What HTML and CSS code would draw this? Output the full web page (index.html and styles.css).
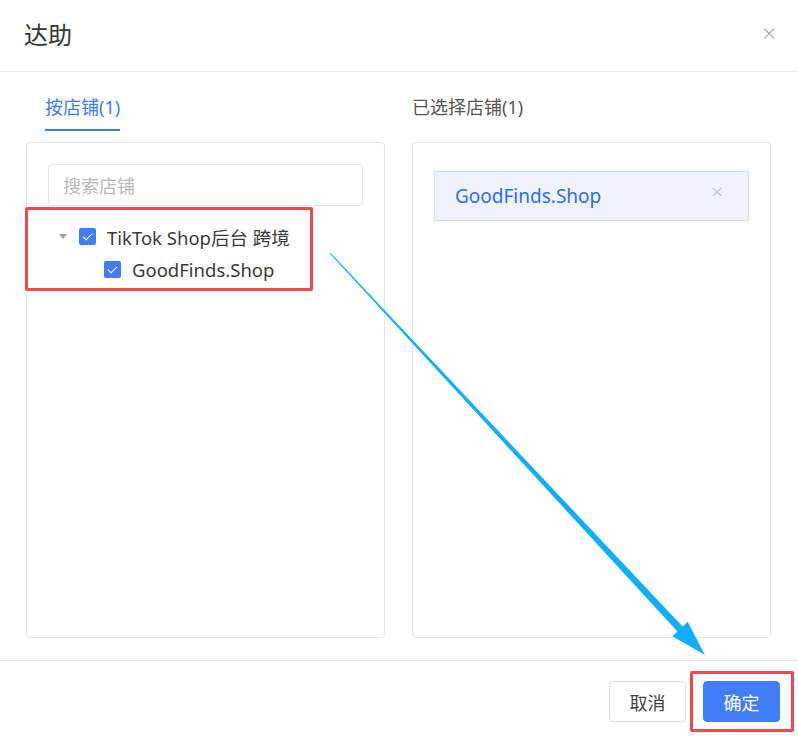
FILE: index.html
```html
<!DOCTYPE html>
<html lang="zh-CN">
<head>
    <meta charset="UTF-8">
    <title>达助</title>
    <link rel="stylesheet" href="styles.css">
</head>
<body>
    <div class="dialog">
        <div class="dialog-header">
            <h1>达助</h1>
            <span class="close">&times;</span>
        </div>

        <div class="cols">
            <div class="col">
                <div class="tab-bar">
                    <span class="tab active">按店铺(1)</span>
                </div>
                <div class="panel">
                    <div class="search">搜索店铺</div>
                    <div class="tree">
                        <div class="node">
                            <span class="caret"></span>
                            <span class="check"></span>
                            <span class="label">TikTok Shop后台 跨境</span>
                        </div>
                        <div class="node child">
                            <span class="check"></span>
                            <span class="label">GoodFinds.Shop</span>
                        </div>
                    </div>
                </div>
            </div>

            <div class="col">
                <div class="tab-bar">
                    <span class="tab plain">已选择店铺(1)</span>
                </div>
                <div class="panel right">
                    <div class="chosen">
                        <span>GoodFinds.Shop</span>
                        <span class="chosen-x">&times;</span>
                    </div>
                </div>
            </div>
        </div>

        <div class="dialog-footer">
            <button class="btn">取消</button>
            <button class="btn primary">确定</button>
        </div>

        <!-- annotations -->
        <div class="mark mark-tree"></div>
        <div class="mark mark-ok"></div>
        <svg class="arrow" width="798" height="738" viewBox="0 0 798 738">
            <polygon fill="#13aef9" points="329.6,253.3 330.4,252.7 682.6,626.6 687.7,621.8 705,655 672.3,636.2 677.4,631.4"/>
        </svg>
    </div>
</body>
</html>
```

FILE: styles.css
```css
* {
    box-sizing: border-box;
}
body {
    margin: 0;
    font-family: "Noto Sans", "Noto Sans CJK SC", sans-serif;
    color: #333;
    background: #fff;
}
.dialog {
    position: relative;
    width: 798px;
    height: 738px;
    background: #fff;
}
.dialog-header {
    height: 72px;
    padding: 0 22px 0 24px;
    display: flex;
    align-items: center;
    justify-content: space-between;
    border-bottom: 1px solid #e4e6ea;
}
.dialog-header h1 {
    margin: 0;
    font-size: 24px;
    font-weight: normal;
    color: #333;
    position: relative;
    top: -2px;
}
.close {
    font-size: 24px;
    color: #a8a8a8;
    font-weight: 300;
    line-height: 1;
    position: relative;
    top: -3px;
}
.cols {
    display: grid;
    grid-template-columns: 359px 359px;
    gap: 27px;
    padding: 0 26px;
}
.tab-bar {
    height: 70px;
    display: flex;
    align-items: flex-start;
}
.tab {
    font-size: 18px;
    margin-top: 23px;
    padding-bottom: 9px;
    line-height: 25px;
}
.tab.active {
    color: #3b7cf6;
    margin-left: 19px;
    border-bottom: 2px solid #3b7cf6;
}
.tab.plain {
    color: #555;
}
.panel {
    height: 496px;
    border: 1px solid #e3e5ea;
    border-radius: 4px;
    padding: 21px 21px 0 21px;
}
.search {
    height: 42px;
    border: 1px solid #e1e3e8;
    border-radius: 4px;
    padding: 0 14px;
    display: flex;
    align-items: center;
    color: #b9b9b9;
    font-size: 18px;
}
.tree {
    padding-top: 14px;
}
.node {
    display: flex;
    align-items: center;
    height: 33px;
    font-size: 18.5px;
    color: #3a3a3a;
}
.node .caret {
    width: 0;
    height: 0;
    margin: 0 12px 0 11px;
    border-left: 4px solid transparent;
    border-right: 4px solid transparent;
    border-top: 5px solid #a0a0a0;
}
.node.child {
    padding-left: 56px;
}
.check {
    width: 17px;
    height: 17px;
    border-radius: 2px;
    background: #3f7ef8;
    position: relative;
    margin-right: 11px;
    flex: none;
}
.check::after {
    content: "";
    position: absolute;
    left: 6px;
    top: 3px;
    width: 4px;
    height: 8px;
    border: solid #fff;
    border-width: 0 1.5px 1.5px 0;
    transform: rotate(45deg);
}
.panel.right {
    padding-top: 28px;
}
.chosen {
    height: 50px;
    background: #eef3ff;
    border: 1px solid #cfdcfb;
    padding: 0 25px 0 20px;
    display: flex;
    align-items: center;
    justify-content: space-between;
    color: #2e6ef0;
    font-size: 19px;
}
.chosen-x {
    color: #a9bce6;
    font-size: 20px;
    font-weight: 300;
    position: relative;
    top: -5px;
}
.dialog-footer {
    position: absolute;
    left: 0;
    right: 0;
    bottom: 0;
    height: 78px;
    border-top: 1px solid #e4e6ea;
    display: flex;
    justify-content: flex-end;
    align-items: flex-start;
    gap: 17px;
    padding: 20px 18px 0 0;
}
.btn {
    width: 77px;
    height: 41px;
    border: 1px solid #dcdfe5;
    border-radius: 4px;
    background: #fff;
    font-family: inherit;
    font-size: 18px;
    color: #444;
}
.btn.primary {
    background: #3f7ef8;
    border-color: #3f7ef8;
    color: #fff;
}
.mark {
    position: absolute;
    border: 3px solid #f0484c;
    border-radius: 2px;
}
.mark-tree {
    left: 25px;
    top: 207px;
    width: 288px;
    height: 84px;
}
.mark-ok {
    left: 690px;
    top: 671px;
    width: 104px;
    height: 61px;
}
.arrow {
    position: absolute;
    left: 0;
    top: 0;
    pointer-events: none;
}
```
